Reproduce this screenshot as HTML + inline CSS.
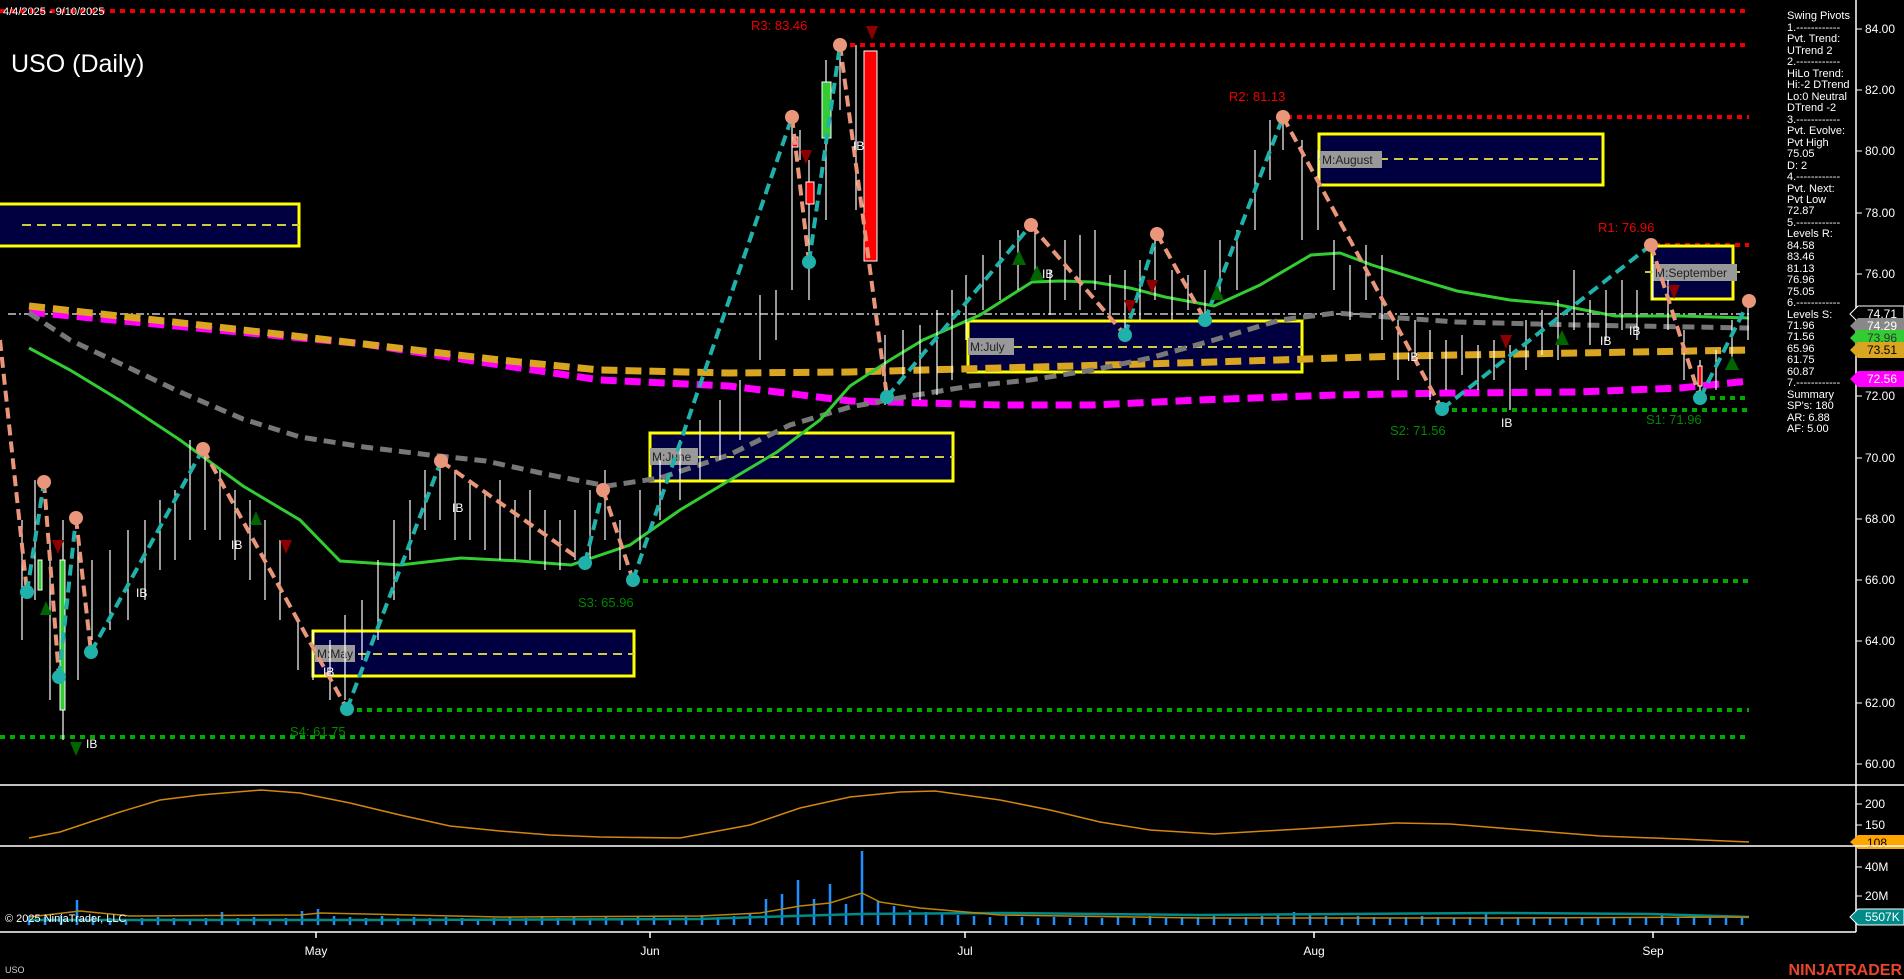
<!DOCTYPE html>
<html><head><meta charset="utf-8"><style>
html,body{margin:0;padding:0;background:#000;width:1904px;height:979px;overflow:hidden}
svg{display:block;font-family:"Liberation Sans",sans-serif}
</style></head><body>
<svg width="1904" height="979" viewBox="0 0 1904 979" xmlns="http://www.w3.org/2000/svg">
<rect width="1904" height="979" fill="#000"/>

<!-- resistance/support dotted lines -->
<g stroke-dasharray="5,5" stroke-width="4">
<line x1="0" y1="11" x2="1749" y2="11" stroke="#e00"/>
<line x1="850" y1="45" x2="1749" y2="45" stroke="#e00"/>
<line x1="1287" y1="117" x2="1749" y2="117" stroke="#e00"/>
<line x1="1655" y1="245" x2="1749" y2="245" stroke="#e00"/>
<line x1="1700" y1="398" x2="1749" y2="398" stroke="#0a0"/>
<line x1="1442" y1="410" x2="1749" y2="410" stroke="#0a0"/>
<line x1="633" y1="581" x2="1749" y2="581" stroke="#0a0"/>
<line x1="347" y1="710" x2="1749" y2="710" stroke="#0a0"/>
<line x1="0" y1="737" x2="1749" y2="737" stroke="#0a0"/>
</g>
<line x1="8" y1="314" x2="1750" y2="314" stroke="#999" stroke-width="2" stroke-dasharray="8,3,2,3"/>

<!-- monthly boxes -->
<g fill="#000040" stroke="#ff0" stroke-width="3">
<rect x="-3" y="204" width="302" height="42"/>
<rect x="313" y="631" width="321" height="45"/>
<rect x="650" y="433" width="303" height="48"/>
<rect x="968" y="321" width="334" height="51"/>
<rect x="1319" y="134" width="284" height="51"/>
<rect x="1652" y="246" width="81" height="53"/>
</g>
<g stroke="#cc4" stroke-width="2" stroke-dasharray="9,6">
<line x1="22" y1="225" x2="299" y2="225"/>
<line x1="313" y1="654" x2="634" y2="654"/>
<line x1="650" y1="457" x2="953" y2="457"/>
<line x1="968" y1="347" x2="1302" y2="347"/>
<line x1="1319" y1="159" x2="1603" y2="159"/>
<line x1="1645" y1="272" x2="1740" y2="272"/>
</g>
<g font-size="12" fill="#222">
<rect x="315" y="645" width="40" height="17" fill="#999"/><text x="317" y="658">M:May</text>
<rect x="650" y="448" width="48" height="17" fill="#999"/><text x="652" y="461">M:June</text>
<rect x="968" y="338" width="46" height="17" fill="#999"/><text x="970" y="351">M:July</text>
<rect x="1320" y="151" width="62" height="17" fill="#999"/><text x="1322" y="164">M:August</text>
<rect x="1653" y="264" width="84" height="17" fill="#999"/><text x="1655" y="277">M:September</text>
</g>

<!-- moving averages -->
<polyline fill="none" stroke="#f0f" stroke-width="7" stroke-dasharray="16,8" points="29,312 364,344 500,365 600,380 729,386 850,401 1000,405 1093,405 1200,400 1336,395 1450,393 1578,392 1680,388 1749,381"/>
<polyline fill="none" stroke="#daa520" stroke-width="7" stroke-dasharray="16,8" points="29,306 200,325 364,344 500,360 600,370 729,373 850,372 1000,368 1214,362 1400,356 1578,353 1749,350"/>
<polyline fill="none" stroke="#777" stroke-width="5" stroke-dasharray="12,7" points="29,313 70,340 121,364 180,392 243,419 300,437 364,447 430,455 486,461 550,475 607,486 660,478 729,455 790,425 850,407 910,396 971,386 1030,380 1093,370 1150,358 1214,340 1280,320 1336,313 1400,318 1457,322 1578,325 1749,328"/>
<polyline fill="none" stroke="#3c3" stroke-width="3" points="29,348 70,370 121,401 180,440 243,486 300,520 340,561 400,565 461,558 520,561 571,565 630,545 680,510 730,480 777,452 820,420 850,386 890,360 923,340 980,315 1032,282 1060,281 1093,282 1130,288 1165,297 1214,306 1260,285 1311,255 1340,253 1372,265 1420,280 1457,291 1510,300 1554,304 1615,316 1680,316 1749,318"/>

<!-- candle wicks -->
<g stroke="#fff" stroke-width="1.2">
<line x1="22" y1="520" x2="22" y2="640"/><line x1="35" y1="480" x2="35" y2="600"/><line x1="50" y1="540" x2="50" y2="700"/>
<line x1="63" y1="520" x2="63" y2="740"/><line x1="78" y1="540" x2="78" y2="680"/><line x1="92" y1="560" x2="92" y2="640"/>
<line x1="110" y1="550" x2="110" y2="630"/><line x1="128" y1="530" x2="128" y2="620"/><line x1="145" y1="520" x2="145" y2="600"/>
<line x1="160" y1="500" x2="160" y2="570"/><line x1="175" y1="490" x2="175" y2="560"/><line x1="190" y1="440" x2="190" y2="540"/>
<line x1="205" y1="450" x2="205" y2="530"/><line x1="220" y1="470" x2="220" y2="540"/><line x1="235" y1="490" x2="235" y2="560"/>
<line x1="250" y1="500" x2="250" y2="580"/><line x1="265" y1="520" x2="265" y2="600"/><line x1="280" y1="540" x2="280" y2="620"/>
<line x1="298" y1="620" x2="298" y2="670"/><line x1="313" y1="630" x2="313" y2="680"/><line x1="330" y1="640" x2="330" y2="700"/>
<line x1="345" y1="615" x2="345" y2="700"/><line x1="362" y1="600" x2="362" y2="660"/><line x1="378" y1="560" x2="378" y2="640"/>
<line x1="394" y1="520" x2="394" y2="600"/><line x1="410" y1="500" x2="410" y2="560"/><line x1="425" y1="470" x2="425" y2="530"/>
<line x1="440" y1="460" x2="440" y2="520"/><line x1="455" y1="470" x2="455" y2="540"/><line x1="470" y1="480" x2="470" y2="540"/>
<line x1="485" y1="490" x2="485" y2="550"/><line x1="500" y1="480" x2="500" y2="560"/><line x1="515" y1="500" x2="515" y2="560"/>
<line x1="530" y1="490" x2="530" y2="560"/><line x1="545" y1="510" x2="545" y2="570"/><line x1="560" y1="520" x2="560" y2="570"/>
<line x1="575" y1="510" x2="575" y2="560"/><line x1="590" y1="490" x2="590" y2="560"/><line x1="605" y1="470" x2="605" y2="540"/>
<line x1="620" y1="520" x2="620" y2="570"/><line x1="640" y1="490" x2="640" y2="550"/><line x1="660" y1="460" x2="660" y2="520"/>
<line x1="680" y1="440" x2="680" y2="500"/><line x1="700" y1="420" x2="700" y2="480"/><line x1="720" y1="400" x2="720" y2="460"/>
<line x1="740" y1="380" x2="740" y2="440"/><line x1="760" y1="295" x2="760" y2="360"/><line x1="776" y1="290" x2="776" y2="340"/>
<line x1="792" y1="110" x2="792" y2="290"/><line x1="800" y1="130" x2="800" y2="160"/><line x1="809" y1="160" x2="809" y2="300"/>
<line x1="826" y1="60" x2="826" y2="220"/><line x1="840" y1="40" x2="840" y2="110"/><line x1="856" y1="45" x2="856" y2="210"/>
<line x1="868" y1="180" x2="868" y2="200"/><line x1="885" y1="335" x2="885" y2="405"/><line x1="903" y1="330" x2="903" y2="380"/>
<line x1="920" y1="325" x2="920" y2="400"/><line x1="937" y1="310" x2="937" y2="395"/><line x1="952" y1="290" x2="952" y2="380"/>
<line x1="966" y1="275" x2="966" y2="340"/><line x1="983" y1="255" x2="983" y2="310"/><line x1="1000" y1="240" x2="1000" y2="300"/>
<line x1="1018" y1="230" x2="1018" y2="290"/><line x1="1035" y1="225" x2="1035" y2="280"/><line x1="1050" y1="270" x2="1050" y2="315"/>
<line x1="1065" y1="240" x2="1065" y2="300"/><line x1="1080" y1="235" x2="1080" y2="310"/><line x1="1095" y1="230" x2="1095" y2="290"/>
<line x1="1110" y1="275" x2="1110" y2="320"/><line x1="1125" y1="270" x2="1125" y2="340"/><line x1="1140" y1="260" x2="1140" y2="320"/>
<line x1="1155" y1="230" x2="1155" y2="300"/><line x1="1172" y1="270" x2="1172" y2="320"/><line x1="1188" y1="275" x2="1188" y2="310"/>
<line x1="1205" y1="270" x2="1205" y2="320"/><line x1="1220" y1="240" x2="1220" y2="300"/><line x1="1237" y1="230" x2="1237" y2="290"/>
<line x1="1255" y1="150" x2="1255" y2="230"/><line x1="1270" y1="120" x2="1270" y2="180"/><line x1="1283" y1="115" x2="1283" y2="150"/>
<line x1="1302" y1="140" x2="1302" y2="240"/><line x1="1318" y1="150" x2="1318" y2="230"/><line x1="1334" y1="240" x2="1334" y2="290"/>
<line x1="1350" y1="265" x2="1350" y2="320"/><line x1="1366" y1="245" x2="1366" y2="300"/><line x1="1382" y1="255" x2="1382" y2="340"/>
<line x1="1398" y1="320" x2="1398" y2="380"/><line x1="1415" y1="320" x2="1415" y2="360"/><line x1="1430" y1="330" x2="1430" y2="400"/>
<line x1="1446" y1="340" x2="1446" y2="390"/><line x1="1462" y1="335" x2="1462" y2="375"/><line x1="1478" y1="345" x2="1478" y2="390"/>
<line x1="1494" y1="340" x2="1494" y2="380"/><line x1="1510" y1="345" x2="1510" y2="410"/><line x1="1526" y1="320" x2="1526" y2="370"/>
<line x1="1542" y1="310" x2="1542" y2="355"/><line x1="1558" y1="300" x2="1558" y2="360"/><line x1="1574" y1="270" x2="1574" y2="330"/>
<line x1="1590" y1="300" x2="1590" y2="345"/><line x1="1606" y1="290" x2="1606" y2="340"/><line x1="1622" y1="280" x2="1622" y2="330"/>
<line x1="1637" y1="290" x2="1637" y2="340"/><line x1="1653" y1="245" x2="1653" y2="300"/><line x1="1668" y1="280" x2="1668" y2="330"/>
<line x1="1684" y1="330" x2="1684" y2="380"/><line x1="1700" y1="360" x2="1700" y2="400"/><line x1="1716" y1="350" x2="1716" y2="390"/>
<line x1="1732" y1="320" x2="1732" y2="360"/><line x1="1748" y1="300" x2="1748" y2="340"/>
</g>
<g stroke="#fff" stroke-width="1">
<rect x="864" y="51" width="13" height="210" fill="#f00"/>
<rect x="822" y="82" width="9" height="56" fill="#3c3"/>
<rect x="806" y="182" width="8" height="22" fill="#f00"/>
<rect x="792" y="137" width="6" height="10" fill="#f00"/>
<rect x="60" y="560" width="5" height="150" fill="#3c3"/>
<rect x="38" y="560" width="4" height="30" fill="#3c3"/>
<rect x="1698" y="366" width="4" height="20" fill="#f00"/>
</g>

<!-- swing lines -->
<g fill="none" stroke-width="4" stroke-dasharray="11,6">
<g stroke="#e9967a">
<polyline points="0,340 27,592"/><polyline points="44,482 59,677"/><polyline points="76,518 91,652"/>
<polyline points="203,449 347,709"/><polyline points="441,461 585,563"/><polyline points="603,490 633,580"/>
<polyline points="792,117 809,262"/><polyline points="840,45 887,397"/><polyline points="1031,225 1125,335"/>
<polyline points="1157,234 1205,320"/><polyline points="1283,117 1442,409"/><polyline points="1651,245 1700,398"/>
</g>
<g stroke="#20b2aa">
<polyline points="27,592 44,482"/><polyline points="59,677 76,518"/><polyline points="91,652 203,449"/>
<polyline points="347,709 441,461"/><polyline points="585,563 603,490"/><polyline points="633,580 792,117"/>
<polyline points="809,262 840,45"/><polyline points="887,397 1031,225"/><polyline points="1125,335 1157,234"/>
<polyline points="1205,320 1283,117"/><polyline points="1442,409 1651,245"/><polyline points="1700,398 1749,301"/>
</g>
</g>
<g fill="#e9967a">
<circle cx="44" cy="482" r="7"/><circle cx="76" cy="518" r="7"/><circle cx="203" cy="449" r="7"/><circle cx="441" cy="461" r="7"/>
<circle cx="603" cy="490" r="7"/><circle cx="792" cy="117" r="7"/><circle cx="840" cy="45" r="7"/><circle cx="1031" cy="225" r="7"/>
<circle cx="1157" cy="234" r="7"/><circle cx="1283" cy="117" r="7"/><circle cx="1651" cy="245" r="7"/><circle cx="1749" cy="301" r="7"/>
</g>
<g fill="#20b2aa">
<circle cx="27" cy="592" r="7"/><circle cx="59" cy="677" r="7"/><circle cx="91" cy="652" r="7"/><circle cx="347" cy="709" r="7"/>
<circle cx="585" cy="563" r="7"/><circle cx="633" cy="580" r="7"/><circle cx="809" cy="262" r="7"/><circle cx="887" cy="397" r="7"/>
<circle cx="1125" cy="335" r="7"/><circle cx="1205" cy="320" r="7"/><circle cx="1442" cy="409" r="7"/><circle cx="1700" cy="398" r="7"/>
</g>
<!-- triangles -->
<g fill="#8b0000">
<polygon points="866,26 878,26 872,40"/><polygon points="800,150 812,150 806,164"/><polygon points="52,540 64,540 58,554"/>
<polygon points="280,540 292,540 286,554"/><polygon points="1146,280 1158,280 1152,294"/><polygon points="1124,300 1136,300 1130,314"/>
<polygon points="1668,285 1680,285 1674,299"/><polygon points="1500,335 1512,335 1506,349"/>
</g>
<g fill="#006400">
<polygon points="70,742 82,742 76,756"/><polygon points="40,615 52,615 46,601"/><polygon points="1012,265 1026,265 1019,250"/>
<polygon points="1030,280 1044,280 1037,265"/><polygon points="1210,300 1224,300 1217,285"/><polygon points="1555,345 1569,345 1562,330"/>
<polygon points="1725,370 1739,370 1732,356"/><polygon points="250,525 262,525 256,511"/>
</g>
<g fill="#fff" font-size="12">
<text x="86" y="748">IB</text><text x="136" y="597">IB</text><text x="231" y="549">IB</text><text x="323" y="676">IB</text>
<text x="452" y="512">IB</text><text x="853" y="150">IB</text><text x="1042" y="278">IB</text><text x="1407" y="361">IB</text>
<text x="1501" y="427">IB</text><text x="1600" y="345">IB</text><text x="1629" y="335">IB</text>
</g>

<!-- level labels -->
<g font-size="13">
<text x="751" y="30" fill="#e00">R3: 83.46</text>
<text x="1229" y="101" fill="#e00">R2: 81.13</text>
<text x="1598" y="232" fill="#e00">R1: 76.96</text>
<text x="1390" y="435" fill="#080">S2: 71.56</text>
<text x="1646" y="424" fill="#080">S1: 71.96</text>
<text x="578" y="607" fill="#080">S3: 65.96</text>
<text x="290" y="736" fill="#080">S4: 61.75</text>
</g>

<!-- title -->
<text x="3" y="15" font-size="11" fill="#fff">4/4/2025 - 9/10/2025</text>
<text x="11" y="72" font-size="25" fill="#fff">USO (Daily)</text>

<!-- info column -->
<g font-size="11" fill="#fff">
<text x="1787" y="19">Swing Pivots</text><text x="1787" y="31">1.------------</text><text x="1787" y="42">Pvt. Trend:</text>
<text x="1787" y="54">UTrend 2</text><text x="1787" y="65">2.------------</text><text x="1787" y="77">HiLo Trend:</text>
<text x="1787" y="88">Hi:-2 DTrend</text><text x="1787" y="100">Lo:0 Neutral</text><text x="1787" y="111">DTrend -2</text>
<text x="1787" y="123">3.------------</text><text x="1787" y="134">Pvt. Evolve:</text><text x="1787" y="146">Pvt High</text>
<text x="1787" y="157">75.05</text><text x="1787" y="169">D: 2</text><text x="1787" y="180">4.------------</text>
<text x="1787" y="192">Pvt. Next:</text><text x="1787" y="203">Pvt Low</text><text x="1787" y="214">72.87</text>
<text x="1787" y="226">5.------------</text><text x="1787" y="237">Levels R:</text><text x="1787" y="249">84.58</text>
<text x="1787" y="260">83.46</text><text x="1787" y="272">81.13</text><text x="1787" y="283">76.96</text>
<text x="1787" y="295">75.05</text><text x="1787" y="306">6.------------</text><text x="1787" y="318">Levels S:</text>
<text x="1787" y="329">71.96</text><text x="1787" y="340">71.56</text><text x="1787" y="352">65.96</text>
<text x="1787" y="363">61.75</text><text x="1787" y="375">60.87</text><text x="1787" y="386">7.------------</text>
<text x="1787" y="398">Summary</text><text x="1787" y="409">SP's: 180</text><text x="1787" y="421">AR: 6.88</text>
<text x="1787" y="432">AF: 5.00</text>
</g>

<!-- axis -->
<line x1="1856" y1="0" x2="1856" y2="932" stroke="#fff" stroke-width="1.5"/>
<g font-size="12" fill="#fff" stroke="#fff">
<g stroke-width="1">
<line x1="1856" y1="29" x2="1862" y2="29"/><line x1="1856" y1="90" x2="1862" y2="90"/><line x1="1856" y1="151" x2="1862" y2="151"/>
<line x1="1856" y1="213" x2="1862" y2="213"/><line x1="1856" y1="274" x2="1862" y2="274"/><line x1="1856" y1="335" x2="1862" y2="335"/>
<line x1="1856" y1="396" x2="1862" y2="396"/><line x1="1856" y1="458" x2="1862" y2="458"/><line x1="1856" y1="519" x2="1862" y2="519"/>
<line x1="1856" y1="580" x2="1862" y2="580"/><line x1="1856" y1="641" x2="1862" y2="641"/><line x1="1856" y1="703" x2="1862" y2="703"/>
<line x1="1856" y1="764" x2="1862" y2="764"/>
<line x1="1856" y1="804" x2="1862" y2="804"/><line x1="1856" y1="825" x2="1862" y2="825"/>
<line x1="1856" y1="867" x2="1862" y2="867"/><line x1="1856" y1="896" x2="1862" y2="896"/>
</g>
<g stroke="none">
<text x="1865" y="33">84.00</text><text x="1865" y="94">82.00</text><text x="1865" y="155">80.00</text>
<text x="1865" y="217">78.00</text><text x="1865" y="278">76.00</text>
<text x="1865" y="400">72.00</text><text x="1865" y="462">70.00</text><text x="1865" y="523">68.00</text>
<text x="1865" y="584">66.00</text><text x="1865" y="645">64.00</text><text x="1865" y="707">62.00</text>
<text x="1865" y="768">60.00</text>
<text x="1865" y="808">200</text><text x="1865" y="829">150</text>
<text x="1865" y="871">40M</text><text x="1865" y="900">20M</text>
</g>
</g>
<!-- price tags -->
<g font-size="12">
<polygon points="1850,314 1858,306 1904,306 1904,322 1858,322" fill="#000" stroke="#fff"/><text x="1867" y="318" fill="#fff">74.71</text>
<polygon points="1850,326 1858,318 1904,318 1904,334 1858,334" fill="#888"/><text x="1867" y="330" fill="#fff">74.29</text>
<polygon points="1850,338 1858,330 1904,330 1904,346 1858,346" fill="#3c3"/><text x="1867" y="342" fill="#333">73.96</text>
<polygon points="1850,350 1858,342 1904,342 1904,358 1858,358" fill="#daa520"/><text x="1867" y="354" fill="#000">73.51</text>
<polygon points="1850,379 1858,371 1904,371 1904,387 1858,387" fill="#f0f"/><text x="1867" y="383" fill="#fff">72.56</text>
<polygon points="1850,842 1858,835 1904,835 1904,849 1858,849" fill="#ffa500"/><text x="1867" y="847" fill="#000">108</text>
<polygon points="1850,917 1858,909 1904,909 1904,925 1858,925" fill="#008b8b" stroke="#fff"/><text x="1865" y="921" fill="#fff">5507K</text>
</g>

<!-- panel separators -->
<line x1="0" y1="785" x2="1904" y2="785" stroke="#fff" stroke-width="1.5"/>
<line x1="0" y1="846" x2="1904" y2="846" stroke="#fff" stroke-width="1.5"/>
<line x1="0" y1="932" x2="1856" y2="932" stroke="#fff" stroke-width="1.5"/>

<!-- indicator -->
<polyline fill="none" stroke="#d4870f" stroke-width="1.5" points="29,838 60,832 120,812 160,800 200,795 261,790 300,793 350,803 400,815 450,826 500,831 550,835 600,837 680,838 750,825 800,808 850,797 900,792 935,791 1000,800 1050,810 1100,822 1150,830 1214,834 1300,829 1396,823 1450,824 1500,828 1550,832 1600,836 1680,839 1749,842"/>

<!-- volume -->
<g stroke="#1e90ff" stroke-width="2.5">
<line x1="29" y1="925" x2="29" y2="916"/><line x1="45" y1="925" x2="45" y2="917"/><line x1="61" y1="925" x2="61" y2="915"/><line x1="77" y1="925" x2="77" y2="900"/>
<line x1="93" y1="925" x2="93" y2="916"/><line x1="110" y1="925" x2="110" y2="918"/><line x1="126" y1="925" x2="126" y2="919"/><line x1="142" y1="925" x2="142" y2="918"/>
<line x1="158" y1="925" x2="158" y2="917"/><line x1="174" y1="925" x2="174" y2="918"/><line x1="190" y1="925" x2="190" y2="919"/><line x1="206" y1="925" x2="206" y2="918"/>
<line x1="222" y1="925" x2="222" y2="912"/><line x1="238" y1="925" x2="238" y2="918"/><line x1="254" y1="925" x2="254" y2="917"/><line x1="270" y1="925" x2="270" y2="919"/>
<line x1="286" y1="925" x2="286" y2="918"/><line x1="302" y1="925" x2="302" y2="911"/><line x1="318" y1="925" x2="318" y2="909"/><line x1="334" y1="925" x2="334" y2="916"/>
<line x1="350" y1="925" x2="350" y2="917"/><line x1="366" y1="925" x2="366" y2="918"/><line x1="382" y1="925" x2="382" y2="916"/><line x1="398" y1="925" x2="398" y2="918"/>
<line x1="414" y1="925" x2="414" y2="917"/><line x1="430" y1="925" x2="430" y2="918"/><line x1="446" y1="925" x2="446" y2="917"/><line x1="462" y1="925" x2="462" y2="918"/>
<line x1="478" y1="925" x2="478" y2="919"/><line x1="494" y1="925" x2="494" y2="918"/><line x1="510" y1="925" x2="510" y2="917"/><line x1="526" y1="925" x2="526" y2="918"/>
<line x1="542" y1="925" x2="542" y2="916"/><line x1="558" y1="925" x2="558" y2="918"/><line x1="574" y1="925" x2="574" y2="917"/><line x1="590" y1="925" x2="590" y2="918"/>
<line x1="606" y1="925" x2="606" y2="917"/><line x1="622" y1="925" x2="622" y2="918"/><line x1="638" y1="925" x2="638" y2="916"/><line x1="654" y1="925" x2="654" y2="917"/>
<line x1="670" y1="925" x2="670" y2="918"/><line x1="686" y1="925" x2="686" y2="917"/><line x1="702" y1="925" x2="702" y2="915"/><line x1="718" y1="925" x2="718" y2="917"/>
<line x1="734" y1="925" x2="734" y2="916"/><line x1="750" y1="925" x2="750" y2="913"/><line x1="766" y1="925" x2="766" y2="899"/><line x1="782" y1="925" x2="782" y2="894"/>
<line x1="798" y1="925" x2="798" y2="880"/><line x1="814" y1="925" x2="814" y2="899"/><line x1="830" y1="925" x2="830" y2="884"/><line x1="846" y1="925" x2="846" y2="904"/>
<line x1="862" y1="925" x2="862" y2="851"/><line x1="878" y1="925" x2="878" y2="901"/><line x1="894" y1="925" x2="894" y2="906"/><line x1="910" y1="925" x2="910" y2="910"/>
<line x1="926" y1="925" x2="926" y2="912"/><line x1="942" y1="925" x2="942" y2="914"/><line x1="958" y1="925" x2="958" y2="915"/><line x1="974" y1="925" x2="974" y2="916"/>
<line x1="990" y1="925" x2="990" y2="917"/><line x1="1006" y1="925" x2="1006" y2="916"/><line x1="1022" y1="925" x2="1022" y2="917"/><line x1="1038" y1="925" x2="1038" y2="918"/>
<line x1="1054" y1="925" x2="1054" y2="917"/><line x1="1070" y1="925" x2="1070" y2="918"/><line x1="1086" y1="925" x2="1086" y2="916"/><line x1="1102" y1="925" x2="1102" y2="918"/>
<line x1="1118" y1="925" x2="1118" y2="917"/><line x1="1134" y1="925" x2="1134" y2="918"/><line x1="1150" y1="925" x2="1150" y2="916"/><line x1="1166" y1="925" x2="1166" y2="917"/>
<line x1="1182" y1="925" x2="1182" y2="918"/><line x1="1198" y1="925" x2="1198" y2="917"/><line x1="1214" y1="925" x2="1214" y2="916"/><line x1="1230" y1="925" x2="1230" y2="918"/>
<line x1="1246" y1="925" x2="1246" y2="917"/><line x1="1262" y1="925" x2="1262" y2="916"/><line x1="1278" y1="925" x2="1278" y2="915"/><line x1="1294" y1="925" x2="1294" y2="912"/>
<line x1="1310" y1="925" x2="1310" y2="914"/><line x1="1326" y1="925" x2="1326" y2="916"/><line x1="1342" y1="925" x2="1342" y2="917"/><line x1="1358" y1="925" x2="1358" y2="916"/>
<line x1="1374" y1="925" x2="1374" y2="917"/><line x1="1390" y1="925" x2="1390" y2="918"/><line x1="1406" y1="925" x2="1406" y2="917"/><line x1="1422" y1="925" x2="1422" y2="916"/>
<line x1="1438" y1="925" x2="1438" y2="917"/><line x1="1454" y1="925" x2="1454" y2="918"/><line x1="1470" y1="925" x2="1470" y2="917"/><line x1="1486" y1="925" x2="1486" y2="914"/>
<line x1="1502" y1="925" x2="1502" y2="918"/><line x1="1518" y1="925" x2="1518" y2="917"/><line x1="1534" y1="925" x2="1534" y2="918"/><line x1="1550" y1="925" x2="1550" y2="917"/>
<line x1="1566" y1="925" x2="1566" y2="918"/><line x1="1582" y1="925" x2="1582" y2="917"/><line x1="1598" y1="925" x2="1598" y2="918"/><line x1="1614" y1="925" x2="1614" y2="917"/>
<line x1="1630" y1="925" x2="1630" y2="918"/><line x1="1646" y1="925" x2="1646" y2="917"/><line x1="1662" y1="925" x2="1662" y2="915"/><line x1="1678" y1="925" x2="1678" y2="918"/>
<line x1="1694" y1="925" x2="1694" y2="917"/><line x1="1710" y1="925" x2="1710" y2="918"/><line x1="1726" y1="925" x2="1726" y2="918"/><line x1="1742" y1="925" x2="1742" y2="916"/>
</g>
<polyline fill="none" stroke="#008b8b" stroke-width="2.5" points="29,920 400,920 700,919 760,917 860,914 1000,913 1200,915 1500,913 1650,914 1749,917"/>
<polyline fill="none" stroke="#b8860b" stroke-width="1.5" points="29,917 80,911 130,916 300,915 320,913 500,917 700,916 760,913 800,906 830,903 862,893 880,902 920,908 1000,915 1200,918 1500,918 1749,917"/>

<!-- x axis -->
<g stroke="#fff" stroke-width="1.5">
<line x1="316" y1="932" x2="316" y2="938"/><line x1="650" y1="932" x2="650" y2="938"/><line x1="965" y1="932" x2="965" y2="938"/>
<line x1="1314" y1="932" x2="1314" y2="938"/><line x1="1653" y1="932" x2="1653" y2="938"/>
</g>
<g font-size="12" fill="#fff" text-anchor="middle">
<text x="316" y="955">May</text><text x="650" y="955">Jun</text><text x="965" y="955">Jul</text><text x="1314" y="955">Aug</text><text x="1653" y="955">Sep</text>
</g>
<text x="5" y="922" font-size="11" fill="#fff">© 2025 NinjaTrader, LLC</text>
<text x="5" y="973" font-size="9" fill="#ccc">USO</text>
<text x="1902" y="975" font-size="16" font-weight="bold" fill="#e8452c" text-anchor="end">NINJATRADER</text>
</svg>
</body></html>
